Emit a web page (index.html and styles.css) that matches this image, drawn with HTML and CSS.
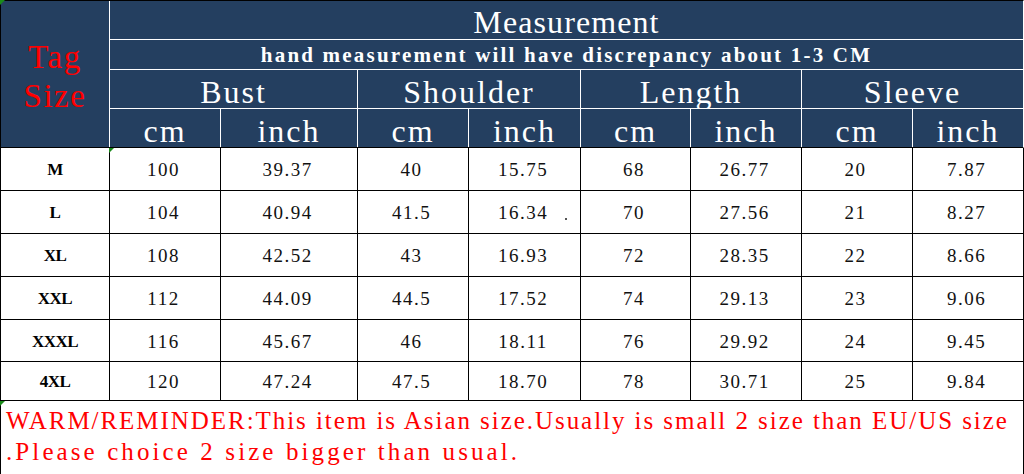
FILE: index.html
```html
<!DOCTYPE html>
<html>
<head>
<meta charset="utf-8">
<link rel="stylesheet" href="styles.css">
</head>
<body>
<div class="sheet">
  <div class="head">
    <div class="tag"><span>Tag</span><span>Size</span></div>
    <div class="title">Measurement</div>
    <div class="note">hand measurement will have discrepancy about 1-3 CM</div>
    <div class="grp">Bust</div>
    <div class="grp">Shoulder</div>
    <div class="grp">Length</div>
    <div class="grp">Sleeve</div>
    <div class="unit">cm</div><div class="unit">inch</div>
    <div class="unit">cm</div><div class="unit">inch</div>
    <div class="unit">cm</div><div class="unit">inch</div>
    <div class="unit">cm</div><div class="unit">inch</div>
  </div>
  <div class="body">
    <div class="size">M</div><div>100</div><div>39.37</div><div>40</div><div>15.75</div><div>68</div><div>26.77</div><div>20</div><div>7.87</div>
    <div class="size">L</div><div>104</div><div>40.94</div><div>41.5</div><div>16.34</div><div>70</div><div>27.56</div><div>21</div><div>8.27</div>
    <div class="size">XL</div><div>108</div><div>42.52</div><div>43</div><div>16.93</div><div>72</div><div>28.35</div><div>22</div><div>8.66</div>
    <div class="size">XXL</div><div>112</div><div>44.09</div><div>44.5</div><div>17.52</div><div>74</div><div>29.13</div><div>23</div><div>9.06</div>
    <div class="size">XXXL</div><div>116</div><div>45.67</div><div>46</div><div>18.11</div><div>76</div><div>29.92</div><div>24</div><div>9.45</div>
    <div class="size">4XL</div><div>120</div><div>47.24</div><div>47.5</div><div>18.70</div><div>78</div><div>30.71</div><div>25</div><div>9.84</div>
  </div>
  <div class="remark"><span class="line1">WARM/REMINDER:This item is Asian size.Usually is small 2 size than EU/US size</span><br><span class="line2">.Please choice 2 size bigger than usual.</span></div>
  <span class="flag flag-a"></span>
  <span class="flag flag-b"></span>
  <span class="flag flag-c"></span>
  <span class="speck"></span>
</div>
</body>
</html>
```

FILE: styles.css
```css
html, body {
  margin: 0;
  padding: 0;
  background: #ffffff;
}

.sheet {
  position: relative;
  width: 1024px;
  height: 474px;
  overflow: hidden;
  font-family: "Liberation Serif", "DejaVu Serif", serif;
}

.head {
  display: grid;
  grid-template-columns: 108px 110px 136px 110px 111px 109px 110px 110px 110px;
  grid-template-rows: 38px 29px 38px 38px;
  gap: 1px;
  background: #ffffff;
  border-top: 1px solid #000000;
  border-left: 1px solid #000000;
  border-right: 1px solid #ffffff;
  border-bottom: 1px solid #000000;
  color: #ffffff;
}

.head > div {
  background: #243f60;
  display: flex;
  align-items: center;
  justify-content: center;
  white-space: nowrap;
}

.tag {
  grid-column: 1;
  grid-row: 1 / span 4;
  flex-direction: column;
  color: #ff0000;
  font-size: 33px;
  letter-spacing: 1.5px;
  line-height: 39px;
  padding-top: 6px;
}

.title {
  grid-column: 2 / span 8;
  font-size: 32px;
  letter-spacing: 1.1px;
  padding-top: 5px;
}

.note {
  grid-column: 2 / span 8;
  font-size: 21px;
  font-weight: bold;
  letter-spacing: 2.2px;
  padding-top: 2px;
}

.grp {
  grid-column: span 2;
  font-size: 32px;
  letter-spacing: 2px;
  padding-top: 6px;
}

.unit {
  font-size: 32px;
  letter-spacing: 2px;
  padding-top: 7px;
}

.body {
  display: grid;
  grid-template-columns: 108px 110px 136px 110px 111px 109px 110px 110px 110px;
  grid-template-rows: 42px 42px 42px 42px 41px 38px;
  gap: 1px;
  background: #000000;
  border-left: 1px solid #000000;
  border-right: 1px solid #000000;
  border-bottom: 1px solid #000000;
}

.body > div {
  background: #ffffff;
  display: flex;
  align-items: center;
  justify-content: center;
  font-size: 19px;
  letter-spacing: 1.5px;
  color: #111111;
  padding: 2px 3px 0 0;
}

.body > .size {
  font-weight: bold;
  font-size: 17px;
  letter-spacing: -0.5px;
  color: #000000;
  padding: 2px 0 0 0;
}

.remark {
  height: 73px;
  box-sizing: border-box;
  border-left: 1px solid #000000;
  border-right: 1px solid #000000;
  padding: 4px 0 0 5px;
  color: #ff0000;
  font-size: 25px;
  line-height: 31px;
  white-space: nowrap;
}

.line1 {
  letter-spacing: 1.95px;
}

.line2 {
  letter-spacing: 3.1px;
}

.flag {
  position: absolute;
  width: 0;
  height: 0;
  border-top: 5px solid #1a8a1a;
  border-right: 5px solid transparent;
}

.flag-a { left: 0; top: 0; }
.flag-b { left: 109px; top: 148px; }
.flag-c { left: 0; top: 401px; }

.speck {
  position: absolute;
  left: 565px;
  top: 218px;
  width: 2px;
  height: 2px;
  background: #555555;
}
```
